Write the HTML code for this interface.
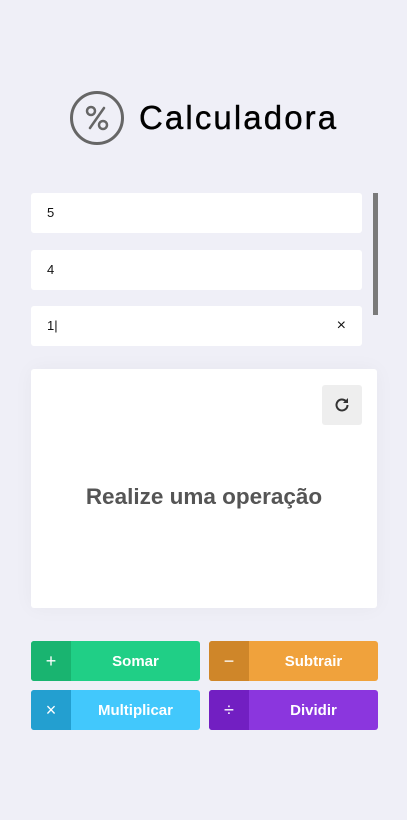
<!DOCTYPE html>
<html><head><style>
body{margin:0;width:407px;height:820px;background:#efeff7;font-family:"Liberation Sans",sans-serif;position:relative;overflow:hidden}
.inp{position:absolute;left:31px;width:331px;height:40px;background:#fff;border-radius:3px;font-size:13px;line-height:40px;text-indent:16px;color:#111}
.card{position:absolute;left:31px;top:369px;width:346px;height:239px;background:#fff;border-radius:3px;box-shadow:0 0 20px rgba(0,0,0,.04)}
.btn{position:absolute;width:169px;height:40px;border-radius:3px;overflow:hidden;color:#fff;font-weight:bold;font-size:15px}
.btn .i{position:absolute;left:0;top:0;width:40px;height:100%;display:flex;align-items:center;justify-content:center;font-weight:normal;font-size:18px}
.btn .t{position:absolute;left:40px;right:0;top:1px;line-height:40px;text-align:center}
</style></head><body>
<svg style="position:absolute;left:69px;top:90px" width="56" height="56" viewBox="0 0 56 56"><circle cx="28" cy="28" r="25.5" fill="none" stroke="#666" stroke-width="3"/><circle cx="22" cy="21" r="4" fill="none" stroke="#666" stroke-width="2.5"/><circle cx="34" cy="35" r="4" fill="none" stroke="#666" stroke-width="2.5"/><line x1="21" y1="38" x2="35" y2="18" stroke="#666" stroke-width="2.5" stroke-linecap="round"/></svg>
<div style="position:absolute;left:139px;top:99px;font-size:33px;color:#000;letter-spacing:2.1px;-webkit-text-stroke:0.4px #000">Calculadora</div>
<div class="inp" style="top:193px">5</div>
<div class="inp" style="top:250px">4</div>
<div class="inp" style="top:306px">1|<span style="position:absolute;right:16px;font-size:16px">×</span></div>
<div style="position:absolute;left:373px;top:193px;width:5px;height:122px;background:#7a7a7a"></div>
<div class="card">
<div style="position:absolute;left:291px;top:16px;width:40px;height:40px;background:#eee;border-radius:3px;display:flex;align-items:center;justify-content:center"><svg width="18" height="18" viewBox="0 0 18 18"><path d="M14.5 9A5.5 5.5 0 1 1 12.8 5" fill="none" stroke="#333" stroke-width="2"/><path d="M15 2v5h-5z" fill="#333"/></svg></div>
<div style="position:absolute;left:0;right:0;top:115px;text-align:center;font-size:22.5px;font-weight:bold;color:#555">Realize uma operação</div>
</div>
<div class="btn" style="left:31px;top:641px;background:#20cf86"><div class="i" style="background:#19b470">+</div><div class="t">Somar</div></div>
<div class="btn" style="left:209px;top:641px;background:#f0a23c"><div class="i" style="background:#cf8629">−</div><div class="t">Subtrair</div></div>
<div class="btn" style="left:31px;top:690px;background:#42c8fc"><div class="i" style="background:#239fd0">×</div><div class="t">Multiplicar</div></div>
<div class="btn" style="left:209px;top:690px;background:#8b36de"><div class="i" style="background:#721fc2">÷</div><div class="t">Dividir</div></div>
</body></html>
